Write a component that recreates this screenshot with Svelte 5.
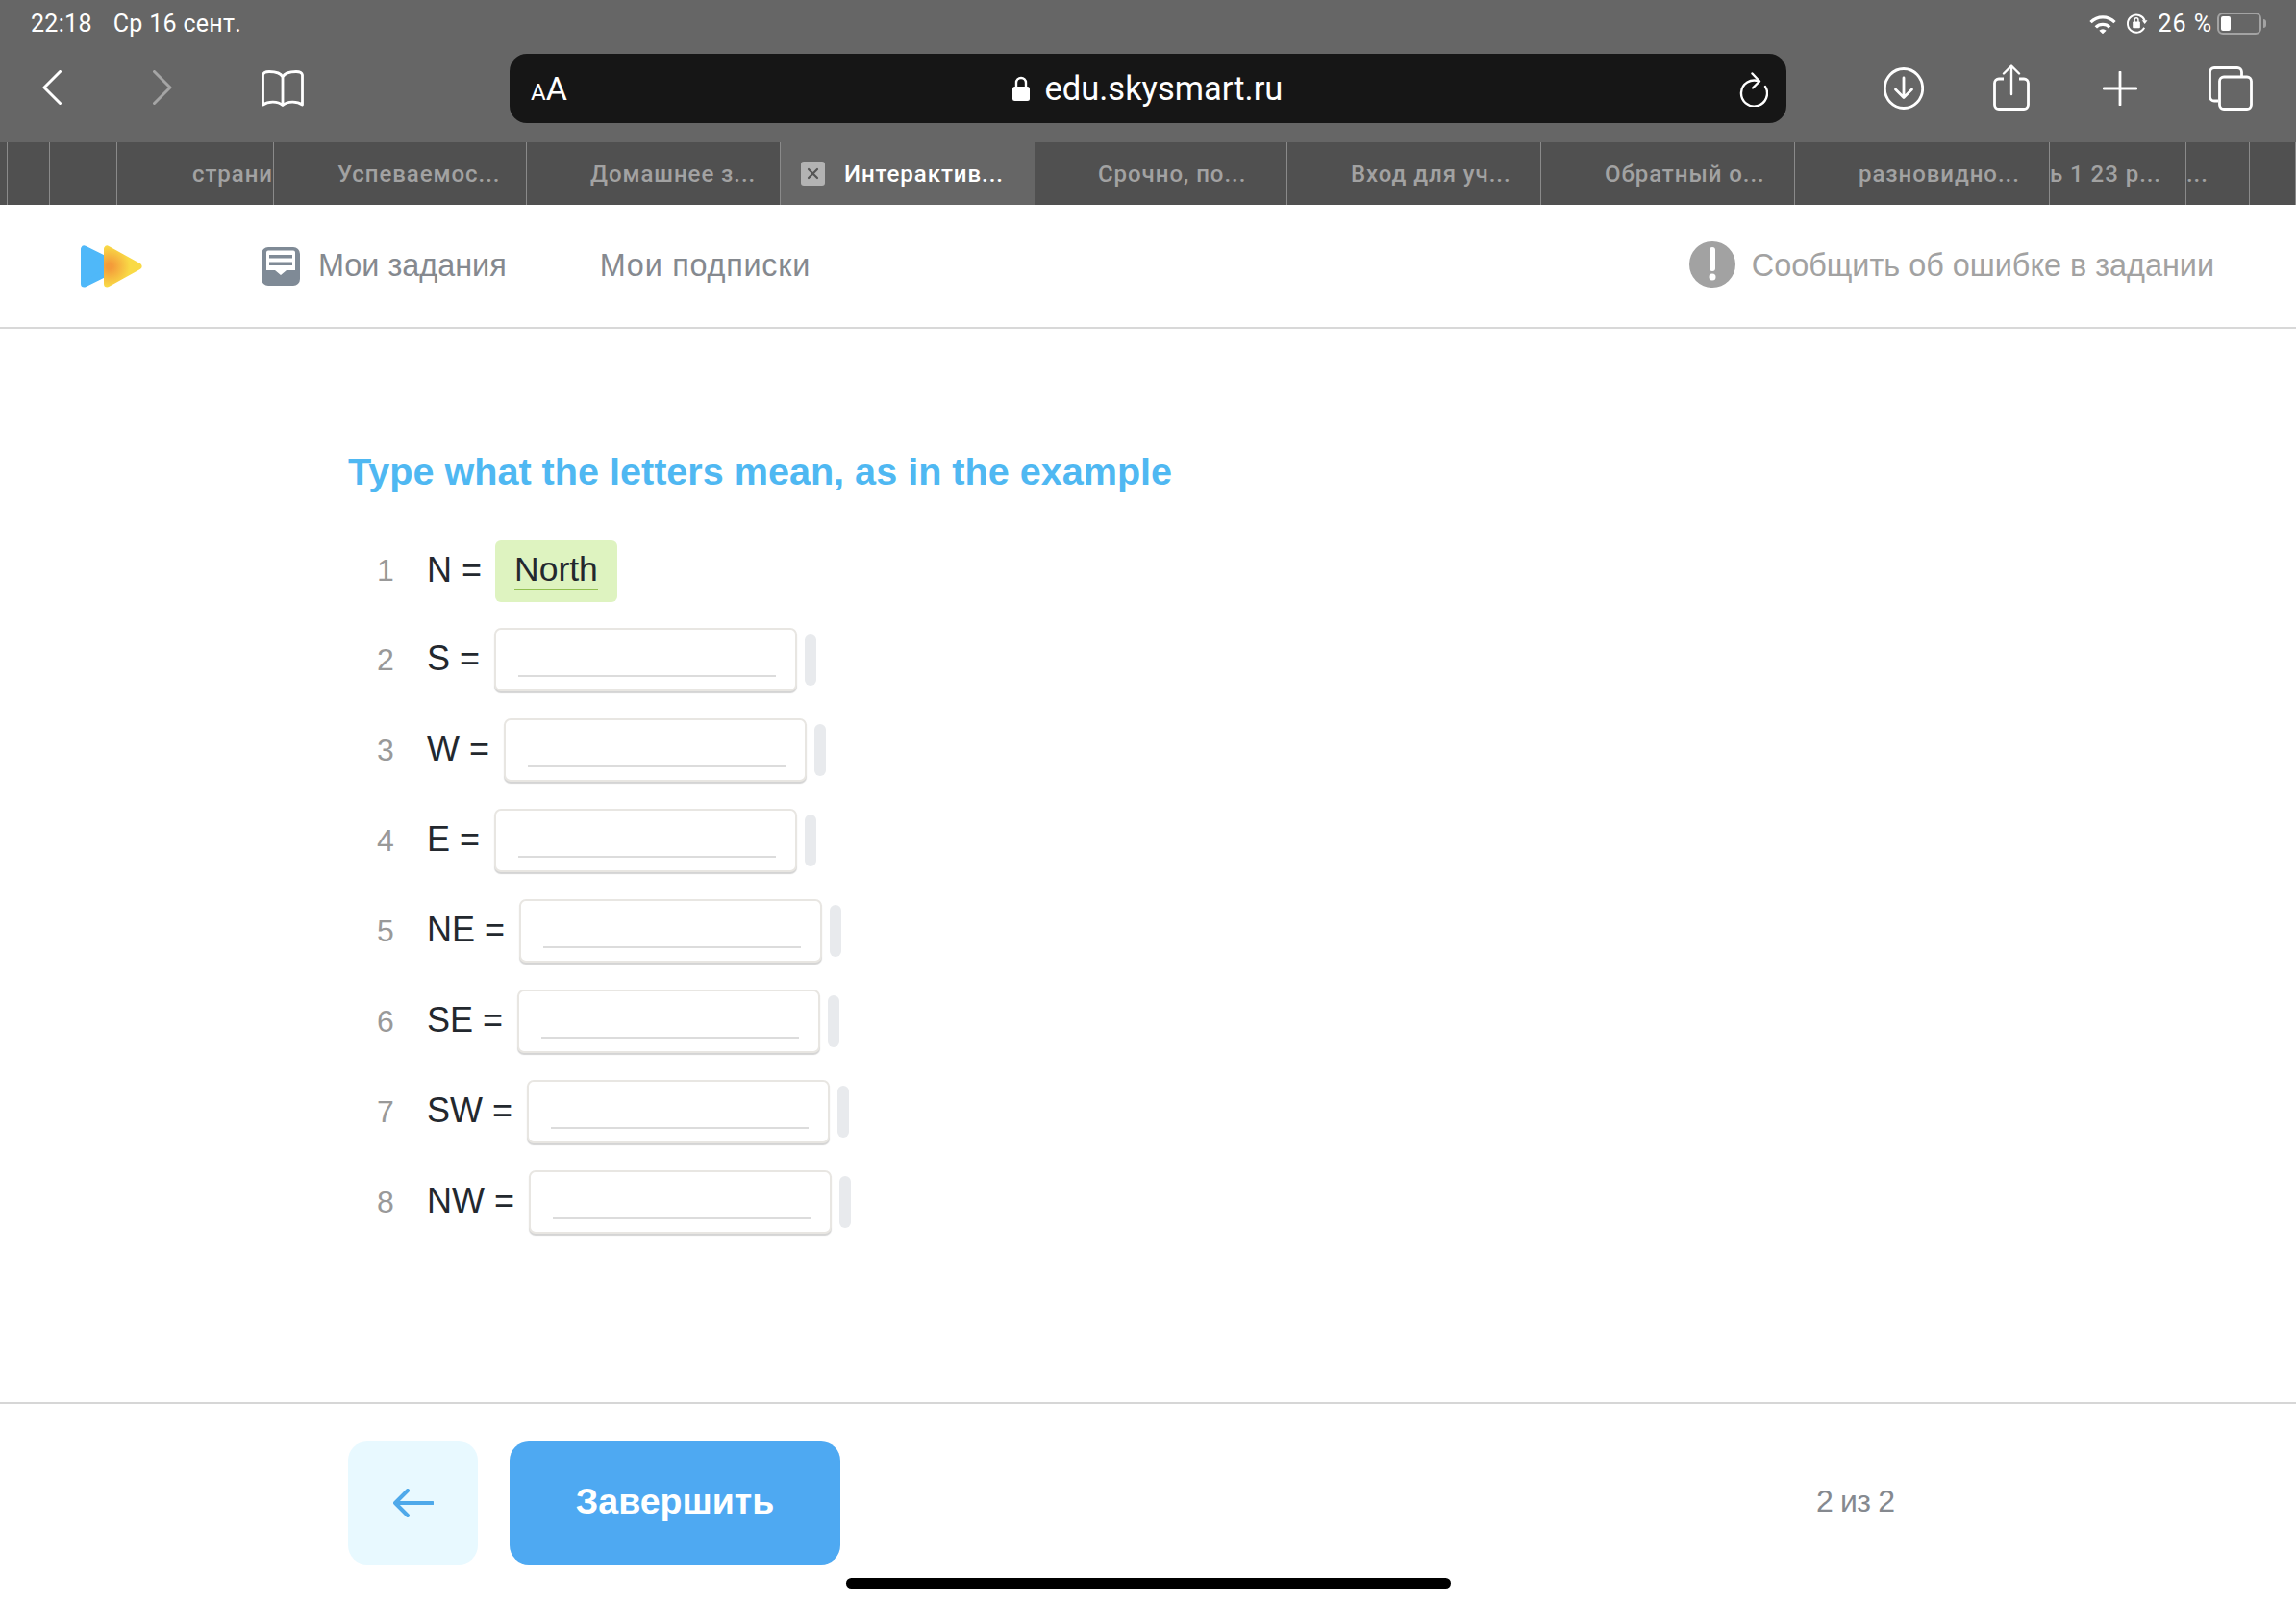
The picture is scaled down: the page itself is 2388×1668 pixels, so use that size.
<script>
  const tabs = [
    { w: 8, t: '', flush: true }, { w: 44, t: '', flush: true }, { w: 70, t: '', flush: true },
    { w: 163, t: 'страни', end: true },
    { w: 263, t: 'Успеваемос...' },
    { w: 264, t: 'Домашнее з...' },
    { w: 264, t: 'Интерактив...', active: true },
    { w: 263, t: 'Срочно, по...' },
    { w: 264, t: 'Вход для уч...' },
    { w: 264, t: 'Обратный о...' },
    { w: 265, t: 'разновидно...' },
    { w: 142, t: 'ь 1 23 р...', flush: true },
    { w: 66, t: '...', flush: true },
    { w: 48, t: '', flush: true }
  ];
  const rows = [
    { n: 2, l: 'S =' }, { n: 3, l: 'W =' }, { n: 4, l: 'E =' }, { n: 5, l: 'NE =' },
    { n: 6, l: 'SE =' }, { n: 7, l: 'SW =' }, { n: 8, l: 'NW =' }
  ];
</script>

<div class="page">
  <header class="chrome">
    <div class="status">
      <span class="time">22:18</span>
      <span class="date">Ср 16 сент.</span>
      <span class="spacer"></span>
      <svg class="wifi" viewBox="0 0 28 20" aria-hidden="true">
        <path d="M1 7.500a18.500 18.500 0 0 1 26 0l-2.200 2.300a15.300 15.300 0 0 0-21.600 0zM6 12.500a11.500 11.500 0 0 1 16 0l-2.300 2.300a8.200 8.200 0 0 0-11.400 0zM10.500 17a5 5 0 0 1 7 0L14 20.200z" fill="#fff"/>
      </svg>
      <svg class="rot" viewBox="0 0 24 24" aria-hidden="true">
        <path d="M20.500 9.500A9.500 9.500 0 1 0 20 17" fill="none" stroke="#fff" stroke-width="2"/>
        <path d="M17.500 9h6l-3 4z" fill="#fff"/>
        <rect x="7.500" y="10.500" width="8" height="7" rx="1" fill="#fff"/>
        <path d="M9.500 11V8.500a2 2 0 0 1 4 0V11" fill="none" stroke="#fff" stroke-width="1.500"/>
      </svg>
      <span class="pct">26 %</span>
      <span class="battery"><span class="charge"></span></span>
      <span class="nub"></span>
    </div>

    <div class="toolbar">
      <svg class="back" viewBox="0 0 20 36" aria-hidden="true">
        <path d="M18.500 1.500 2 18l16.500 16.500" fill="none" stroke="#fff" stroke-width="3" stroke-linecap="round" stroke-linejoin="round"/>
      </svg>
      <svg class="fwd" viewBox="0 0 20 36" aria-hidden="true">
        <path d="M2 1.500 18.500 18 2 34.500" fill="none" stroke="#a5a5a5" stroke-width="3" stroke-linecap="round" stroke-linejoin="round"/>
      </svg>
      <svg class="book" viewBox="0 0 44 38" aria-hidden="true">
        <path d="M22 7C20 3 15 1.500 8 1.500 5 1.500 2 2 1.500 5v31C7 32 17 32 22 36.500 27 32 37 32 42.500 36V5C42 2 39 1.500 36 1.500 29 1.500 24 3 22 7zM22 7v29.500" fill="none" stroke="#fff" stroke-width="2.800" stroke-linejoin="round"/>
      </svg>

      <div class="address">
        <span class="aa"><small>A</small>A</span>
        <span class="url">
          <svg class="lock" viewBox="0 0 18 26" aria-hidden="true">
            <rect x="0" y="11" width="18" height="15" rx="2.500" fill="#fff"/>
            <path d="M4 12V7a5 5 0 0 1 10 0v5" fill="none" stroke="#fff" stroke-width="2.400"/>
          </svg>
          edu.skysmart.ru
        </span>
        <svg class="reload" viewBox="0 0 30 36" aria-hidden="true">
          <path d="M20.500 9.500A13.500 13.500 0 1 0 27 15" fill="none" stroke="#fff" stroke-width="2.400" stroke-linecap="round"/>
          <path d="M13.500 1.500 21 9.500l-7 7" fill="none" stroke="#fff" stroke-width="2.400" stroke-linecap="round" stroke-linejoin="round"/>
        </svg>
      </div>

      <svg class="download" viewBox="0 0 42 44" aria-hidden="true">
        <ellipse cx="21" cy="22" rx="19.700" ry="20.500" fill="none" stroke="#fff" stroke-width="2.800"/>
        <path d="M21 11v20M12.500 23l8.500 8.500 8.500-8.500" fill="none" stroke="#fff" stroke-width="2.800" stroke-linecap="round" stroke-linejoin="round"/>
      </svg>
      <svg class="share" viewBox="0 0 38 48" aria-hidden="true">
        <path d="M11 15H6a4.500 4.500 0 0 0-4.500 4.500V42A4.500 4.500 0 0 0 6 46.500h26a4.500 4.500 0 0 0 4.500-4.500V19.500A4.500 4.500 0 0 0 32 15h-5" fill="none" stroke="#fff" stroke-width="2.800"/>
        <path d="M19 31V2M11 9.500 19 1.500l8 8" fill="none" stroke="#fff" stroke-width="2.400" stroke-linecap="round" stroke-linejoin="round"/>
      </svg>
      <svg class="plus" viewBox="0 0 36 36" aria-hidden="true">
        <path d="M18 1v34M1 18h34" fill="none" stroke="#fff" stroke-width="2.800" stroke-linecap="round"/>
      </svg>
      <svg class="copies" viewBox="0 0 46 46" aria-hidden="true">
        <path d="M10 36H6a4.500 4.500 0 0 1-4.500-4.500V6A4.500 4.500 0 0 1 6 1.500h24A4.500 4.500 0 0 1 34.500 6v4" fill="none" stroke="#fff" stroke-width="2.800"/>
        <rect x="11.500" y="11" width="33" height="33.500" rx="4.500" fill="none" stroke="#fff" stroke-width="2.800"/>
      </svg>
    </div>

    <div class="tabs">
      {#each tabs as tab}
        <div class="tab" class:active={tab.active} class:end={tab.end} class:flush={tab.flush} style="width:{tab.w}px">
          {#if tab.active}
            <span class="close"><svg viewBox="0 0 25 25" aria-hidden="true"><path d="M8 8l9 9M17 8l-9 9" stroke="#555" stroke-width="2.200" stroke-linecap="round"/></svg></span>
          {/if}
          <span>{tab.t}</span>
        </div>
      {/each}
    </div>
  </header>

  <nav class="nav">
    <svg class="logo" viewBox="0 0 64 44" aria-hidden="true">
      <defs>
        <radialGradient id="glow" gradientUnits="userSpaceOnUse" cx="30" cy="22" r="21">
          <stop offset="0.15" stop-color="#f49c3a"/>
          <stop offset="1" stop-color="#f9da46"/>
        </radialGradient>
      </defs>
      <path d="M3.500 4v36L40 22z" fill="#4fb8f9" stroke="#4fb8f9" stroke-width="7" stroke-linejoin="round"/>
      <path d="M27.500 4v36L60 22z" fill="url(#glow)" stroke="url(#glow)" stroke-width="7" stroke-linejoin="round"/>
    </svg>
    <svg class="tasks" viewBox="0 0 40 40" aria-hidden="true">
      <rect width="40" height="40" rx="7" fill="#7f8a96"/>
      <path d="M5 5.500a2 2 0 0 1 2-2h26a2 2 0 0 1 2 2V24h-9l-6 5-6-5H5z" fill="#fff"/>
      <path d="M8 8h24v3.500H8zM8 15.500h24V19H8z" fill="#7f8a96"/>
    </svg>
    <a class="link first">Мои задания</a>
    <a class="link second">Мои подписки</a>
    <span class="spacer"></span>
    <svg class="warn" viewBox="0 0 48 48" aria-hidden="true">
      <circle cx="24" cy="24" r="24" fill="#a2a2a2"/>
      <path d="M24 9v19" stroke="#fff" stroke-width="6" stroke-linecap="round"/>
      <circle cx="24" cy="37" r="3.500" fill="#fff"/>
    </svg>
    <a class="report">Сообщить об ошибке в задании</a>
  </nav>

  <main class="main">
    <h1>Type what the letters mean, as in the example</h1>
    <div class="list">
      <div class="row lead">
        <span class="num">1</span>
        <span class="label">N =</span>
        <span class="answer"><span class="word">North</span></span>
      </div>
      {#each rows as r}
        <div class="row">
          <span class="num">{r.n}</span>
          <span class="label">{r.l}</span>
          <span class="field"><span class="line"></span></span>
          <span class="pill"></span>
        </div>
      {/each}
    </div>
  </main>

  <footer class="footer">
    <button class="prev" aria-label="Назад">
      <svg viewBox="0 0 42 30" aria-hidden="true">
        <path d="M41 15H2M15 2 2 15l13 13" fill="none" stroke="#4ea9ea" stroke-width="4" stroke-linecap="round" stroke-linejoin="round"/>
      </svg>
    </button>
    <button class="finish">Завершить</button>
    <span class="count">2 из 2</span>
  </footer>

  <div class="home"></div>
</div>

<style>
  :global(body) { margin: 0; background: #fff; }
  .page {
    position: relative;
    width: 2388px;
    height: 1668px;
    display: flex;
    flex-direction: column;
    overflow: hidden;
    font-family: "Liberation Sans", Arial, sans-serif;
    background: #fff;
  }
  svg { display: block; flex: none; }
  .spacer { flex: 1; }

  .chrome { background: #666; color: #fff; font-family: Roboto, "Noto Sans", sans-serif; }
  .status {
    height: 56px;
    display: flex;
    align-items: center;
    padding: 0 31px 8px 32px;
    box-sizing: border-box;
    font-size: 25px;
    letter-spacing: 0.3px;
  }
  .date { margin-left: 22px; }
  .wifi { width: 30px; height: 21px; }
  .rot { width: 23px; height: 24px; margin-left: 9px; }
  .pct { margin-left: 10px; letter-spacing: 1px; }
  .battery {
    width: 46px; height: 23px; margin-left: 5px;
    box-sizing: border-box;
    border: 2px solid #a3a3a3;
    border-radius: 6px;
    padding: 2px;
    display: flex;
  }
  .charge { width: 10px; background: #fff; border-radius: 2px; }
  .nub { width: 3px; height: 9px; margin-left: 2px; background: #a3a3a3; border-radius: 0 3px 3px 0; }

  .toolbar { height: 92px; display: flex; align-items: flex-start; }
  .back { width: 20px; height: 36px; margin: 17px 0 0 44px; }
  .fwd { width: 21px; height: 36px; margin: 17px 0 0 94px; }
  .book { width: 44px; height: 38px; margin: 17px 0 0 93px; }
  .address {
    width: 1328px; height: 72px; margin-left: 214px;
    background: #161616;
    border-radius: 18px;
    display: flex;
    align-items: center;
    position: relative;
    box-sizing: border-box;
    padding: 0 19px 0 22px;
  }
  .aa { font-size: 34px; line-height: 1; }
  .aa small { font-size: 24px; }
  .url {
    flex: 1;
    display: flex;
    align-items: center;
    justify-content: center;
    gap: 15px;
    font-size: 34.500px;
    padding-right: 11px;
  }
  .lock { width: 18px; height: 26px; }
  .reload { width: 30px; height: 36px; margin-top: 2px; }
  .download { width: 42px; height: 44px; margin: 14px 0 0 101px; }
  .share { width: 38px; height: 48px; margin: 11px 0 0 72px; }
  .plus { width: 36px; height: 36px; margin: 18px 0 0 76px; }
  .copies { width: 46px; height: 46px; margin: 13px 0 0 74px; }

  .tabs { height: 65px; display: flex; background: #505050; }
  .tab {
    flex: none;
    box-sizing: border-box;
    border-right: 1px solid #8a8a8a;
    display: flex;
    align-items: center;
    padding-left: 66px;
    color: #a2a2a2;
    font-size: 24px;
    font-weight: 500;
    letter-spacing: 0.95px;
    white-space: nowrap;
    overflow: hidden;
    position: relative;
  }
  .tab.end { justify-content: flex-end; padding-left: 0; }
  .tab.flush { padding-left: 0; }
  .tab.active { background: #666; color: #fff; border-right: 0; gap: 20px; padding-left: 21px; }
  .close { width: 25px; height: 25px; background: #b3b3b3; border-radius: 3px; flex: none; }
  .close svg { width: 25px; height: 25px; }

  .nav {
    height: 129px;
    box-sizing: border-box;
    border-bottom: 2px solid #d8d8d8;
    display: flex;
    align-items: center;
    padding: 0 85px 0 84px;
  }
  .logo { width: 64px; height: 44px; }
  .tasks { width: 40px; height: 40px; margin-left: 124px; }
  .link { font-size: 32.400px; color: #85898f; }
  .first { margin-left: 19px; }
  .second { margin-left: 97px; letter-spacing: 0.75px; }
  .warn { width: 48px; height: 48px; margin-top: -3px; }
  .report { font-size: 32.400px; color: #a2a2a2; margin-left: 17px; }

  .main { height: 1116px; box-sizing: border-box; padding: 0 0 0 362px; flex: none; }
  h1 {
    margin: 0;
    padding-top: 124px;
    font-size: 39.600px;
    line-height: 48px;
    font-weight: 700;
    color: #4fb8f2;
  }
  .list { display: flex; flex-direction: column; gap: 28px; margin-top: 45px; }
  .row { height: 66px; box-sizing: border-box; display: flex; align-items: center; padding-left: 21px; }
  .row.lead { padding-top: 3px; }
  .num { width: 36px; text-align: center; font-size: 32px; color: #999; margin-right: 25px; }
  .label { font-size: 36px; color: #23282e; margin-right: 15px; margin-top: -2px; }
  .answer {
    height: 64px; box-sizing: border-box;
    margin-left: -1.500px;
    background: #def3c0;
    border-radius: 6px;
    padding: 0 20.500px;
    display: flex; align-items: center;
  }
  .word { font-size: 35.500px; color: #23282e; line-height: 39px; border-bottom: 2px solid #92c050; }
  .field {
    width: 315px; height: 66px;
    box-sizing: border-box;
    border: 2px solid #e8e6e2;
    border-radius: 7px;
    box-shadow: 0 2px 1px #d4d4d4;
    background: #fff;
    padding: 0 20px 0 23px;
    display: flex;
    align-items: flex-end;
  }
  .line { flex: 1; height: 2px; background: #dcdcdc; margin-bottom: 13px; }
  .pill { width: 12px; height: 54px; margin-left: 8px; background: #e8eaed; border-radius: 6px; }

  .footer {
    flex: 1;
    box-sizing: border-box;
    border-top: 2px solid #d6d6d6;
    padding: 39px 0 0 362px;
    display: flex;
    align-items: flex-start;
  }
  button { border: 0; padding: 0; margin: 0; font-family: inherit; display: flex; align-items: center; justify-content: center; }
  .prev { width: 135px; height: 128px; background: #e8f9ff; border-radius: 20px; }
  .prev svg { width: 42px; height: 30px; }
  .finish {
    width: 344px; height: 128px; margin-left: 33px;
    padding-bottom: 3px;
    background: #4ea9f2; border-radius: 20px;
    color: #fff; font-size: 37.500px; font-weight: 700;
  }
  .count { margin-left: 1015px; height: 128px; line-height: 124px; font-size: 32px; letter-spacing: -0.8px; color: #85898f; }
  .home { position: absolute; left: 880px; top: 1641px; width: 629px; height: 11px; border-radius: 6px; background: #000; }
</style>
